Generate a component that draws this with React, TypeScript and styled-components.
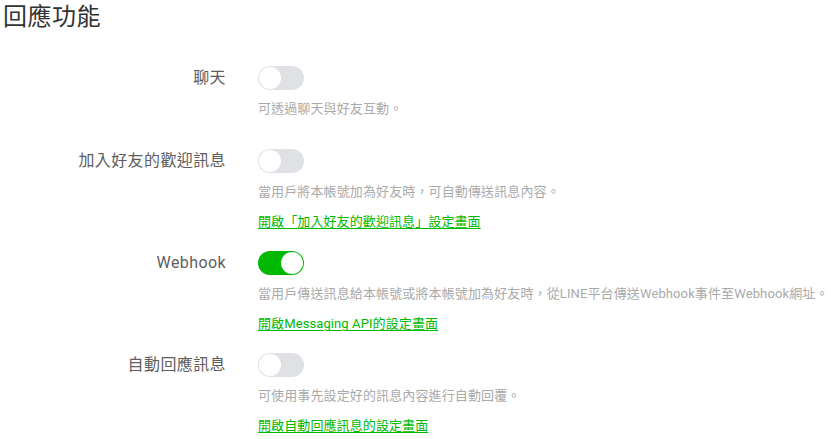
import React, { useState } from "react";
import styled, { createGlobalStyle } from "styled-components";

const GlobalStyle = createGlobalStyle`
  html, body { margin: 0; padding: 0; background: #ffffff; }
  body {
    font-family: Roboto, "Noto Sans CJK TC", "Noto Sans", sans-serif;
    color: #333;
  }
`;

const Page = styled.div`
  width: 831px;
  height: 439px;
  overflow: hidden;
  padding: 3px 0 0 3px;
  box-sizing: border-box;
`;

const Title = styled.h2`
  margin: 0;
  font-size: 24px;
  font-weight: 400;
  line-height: 28px;
  color: #333;
  letter-spacing: 0.5px;
`;

const List = styled.div`
  margin-top: 35px;
  display: flex;
  flex-direction: column;
  gap: 19px;
`;

const Row = styled.div`
  display: grid;
  grid-template-columns: 223px 1fr;
  column-gap: 32px;
  align-items: start;
`;

const Label = styled.div`
  text-align: right;
  font-size: 16px;
  line-height: 24px;
  color: #5e5e5e;
  letter-spacing: 0.4px;
`;

const Content = styled.div`
  display: flex;
  flex-direction: column;
  align-items: flex-start;
  min-width: 0;
`;

const Track = styled.button<{ $on: boolean }>`
  position: relative;
  width: 46px;
  height: 24px;
  border-radius: 12px;
  border: none;
  padding: 0;
  cursor: pointer;
  background: ${(p) => (p.$on ? "#00b900" : "#dfe1e5")};
  transition: background 0.2s;
`;

const Knob = styled.span<{ $on: boolean }>`
  position: absolute;
  top: 1px;
  left: ${(p) => (p.$on ? "23px" : "1px")};
  width: 22px;
  height: 22px;
  border-radius: 50%;
  background: #fff;
  transition: left 0.2s;
`;

const Description = styled.p`
  margin: 9px 0 0;
  font-size: 13px;
  line-height: 20px;
  color: #aaa;
  letter-spacing: 0.12px;
  white-space: nowrap;
  &:last-child {
    margin-bottom: 11px;
  }
`;

const Link = styled.a`
  margin-top: 10px;
  font-size: 13px;
  line-height: 20px;
  color: #00b900;
  letter-spacing: 0.1px;
  text-decoration: underline;
  text-underline-offset: 2px;
  cursor: pointer;
  white-space: nowrap;
`;

type Item = { label: string; on: boolean; desc: string; link?: string };

const items: Item[] = [
  { label: "聊天", on: false, desc: "可透過聊天與好友互動。" },
  {
    label: "加入好友的歡迎訊息",
    on: false,
    desc: "當用戶將本帳號加為好友時，可自動傳送訊息內容。",
    link: "開啟「加入好友的歡迎訊息」設定畫面",
  },
  {
    label: "Webhook",
    on: true,
    desc: "當用戶傳送訊息給本帳號或將本帳號加為好友時，從LINE平台傳送Webhook事件至Webhook網址。",
    link: "開啟Messaging API的設定畫面",
  },
  {
    label: "自動回應訊息",
    on: false,
    desc: "可使用事先設定好的訊息內容進行自動回覆。",
    link: "開啟自動回應訊息的設定畫面",
  },
];

const Toggle: React.FC<{ initial: boolean }> = ({ initial }) => {
  const [on, setOn] = useState(initial);
  return (
    <Track $on={on} onClick={() => setOn(!on)} aria-pressed={on}>
      <Knob $on={on} />
    </Track>
  );
};

export default function App() {
  return (
    <>
      <GlobalStyle />
      <Page>
        <Title>回應功能</Title>
        <List>
          {items.map((it) => (
            <Row key={it.label}>
              <Label>{it.label}</Label>
              <Content>
                <Toggle initial={it.on} />
                <Description>{it.desc}</Description>
                {it.link && <Link>{it.link}</Link>}
              </Content>
            </Row>
          ))}
        </List>
      </Page>
    </>
  );
}
